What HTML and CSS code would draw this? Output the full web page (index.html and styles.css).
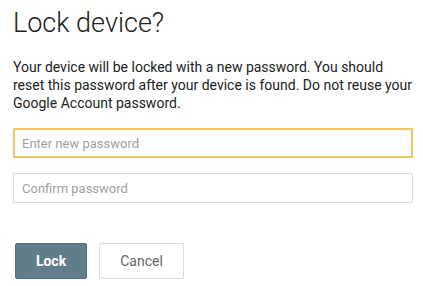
FILE: index.html
```html
<!DOCTYPE html>
<html>
<head>
<meta charset="utf-8">
<link rel="stylesheet" href="styles.css">
</head>
<body>
<div class="dialog">
  <h1 class="title">Lock device?</h1>
  <p class="desc">Your device will be locked with a new password. You should reset this password after your device is found. Do not reuse your Google Account password.</p>
  <div class="fields">
    <input class="field focused" type="password" placeholder="Enter new password">
    <input class="field" type="password" placeholder="Confirm password">
  </div>
  <div class="actions">
    <button class="btn btn-primary">Lock</button>
    <button class="btn btn-secondary">Cancel</button>
  </div>
</div>
</body>
</html>
```

FILE: styles.css
```css
html, body {
  margin: 0;
  padding: 0;
  background: #ffffff;
}
body {
  font-family: Roboto, "Liberation Sans", Arial, sans-serif;
  color: #222222;
}
.dialog {
  padding: 7px 6px 0 13px;
  display: flex;
  flex-direction: column;
}
.title {
  margin: 0;
  font-size: 27px;
  font-weight: 300;
  line-height: 32px;
  color: #222222;
}
.desc {
  margin: 19px 0 0 0;
  font-size: 14px;
  line-height: 18px;
  color: #222222;
  max-width: 404px;
}
.fields {
  display: flex;
  flex-direction: column;
  gap: 15px;
  margin-top: 16px;
}
.field {
  box-sizing: border-box;
  width: 400px;
  height: 30px;
  margin: 0;
  padding: 0 8px;
  border: 1px solid #d9d9d9;
  border-radius: 1px;
  font-family: Roboto, "Liberation Sans", Arial, sans-serif;
  font-size: 13px;
  color: #222;
  outline: none;
  background: #fff;
}
.field.focused {
  border: 2px solid #f0c36d;
  padding: 0 7px;
}
.field::placeholder {
  color: #a0a0a0;
}
.actions {
  display: flex;
  gap: 12px;
  margin-top: 40px;
  padding-left: 2px;
}
.btn {
  box-sizing: border-box;
  height: 36px;
  border-radius: 2px;
  font-family: Roboto, "Liberation Sans", Arial, sans-serif;
  font-size: 14px;
  cursor: pointer;
}
.btn-primary {
  width: 72px;
  background: #607d8b;
  border: 1px solid #546e7a;
  color: #ffffff;
  font-weight: 700;
}
.btn-secondary {
  width: 85px;
  background: #ffffff;
  border: 1px solid #dcdcdc;
  color: #666666;
  font-weight: 400;
}
```
